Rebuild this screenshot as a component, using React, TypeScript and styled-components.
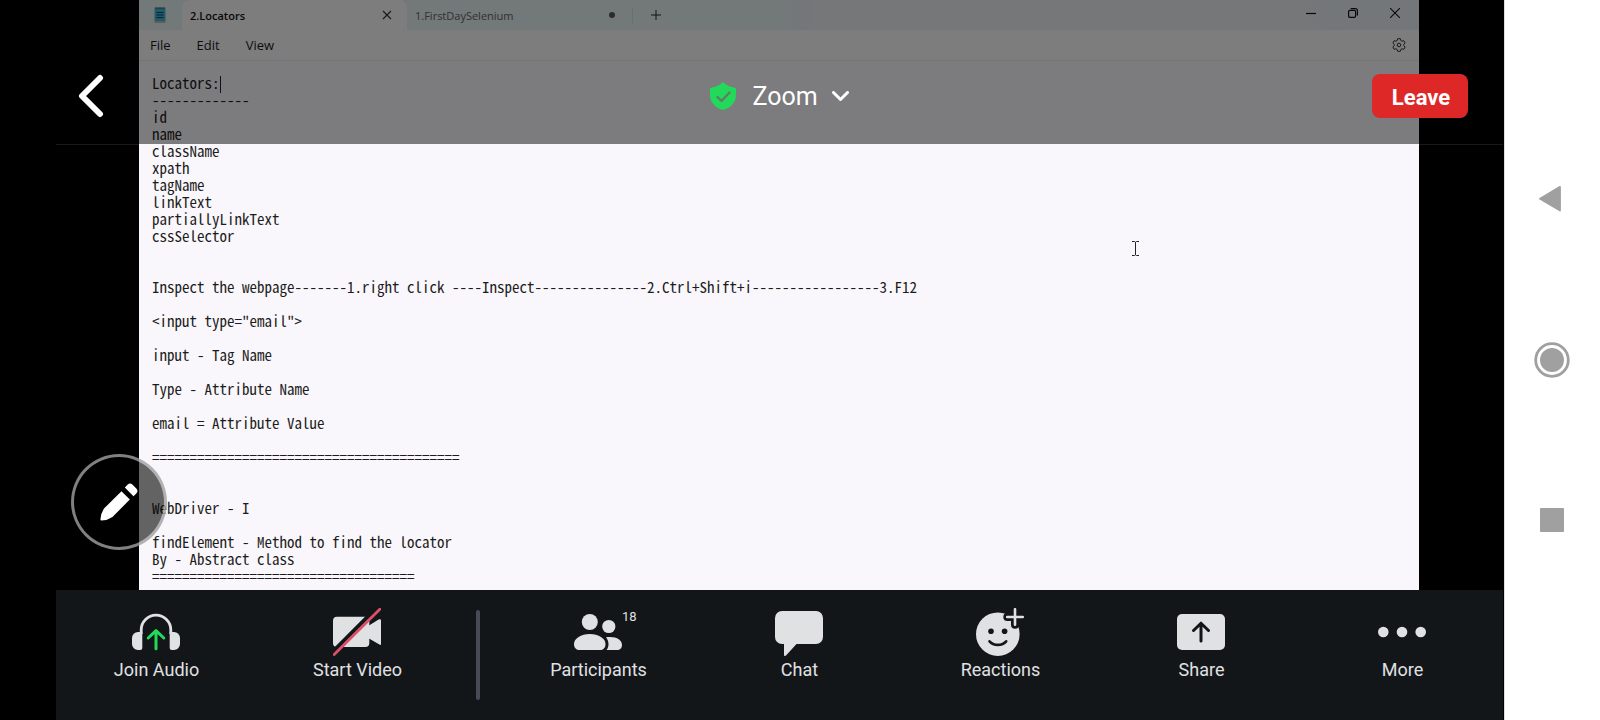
import React from "react";
import styled, { createGlobalStyle } from "styled-components";

const GlobalStyle = createGlobalStyle`
  *, *::before, *::after { box-sizing: border-box; }
  body { margin: 0; background: #000; font-family: Roboto, sans-serif; }
  button { margin: 0; padding: 0; border: 0; background: none; color: inherit; font: inherit; cursor: pointer; }
  svg { display: block; flex: none; }
`;

const Device = styled.div`
  display: flex;
  min-height: 100vh;
  background: #000;
`;

const Meeting = styled.main`
  flex: 1;
  min-width: 0;
  display: flex;
  flex-direction: column;
  margin: 0 1px 0 56px;
`;

const Stage = styled.section`
  position: relative;
  flex: 1;
  display: flex;
  padding: 0 84px 0 83px;
`;

/* Shared desktop window */
const Notepad = styled.div`
  flex: 1;
  min-width: 0;
  display: flex;
  flex-direction: column;
  background: #f9f7fb;
  color: #1b1b1b;
  font-family: "Open Sans", "Noto Sans", sans-serif;
  font-size: 13px;
`;

const TitleBar = styled.div`
  display: flex;
  height: 30px;
  background: linear-gradient(90deg, #e6f0f3 0, #e6f0f3 50%, #edeef2 55%, #edeef2 75%, #e8eff3 100%);
`;

const AppIcon = styled.div`
  display: flex;
  align-items: center;
  width: 43px;
  padding-left: 15px;
`;

const Tab = styled.div<{ $active?: boolean }>`
  display: flex;
  align-items: center;
  justify-content: space-between;
  width: 225px;
  padding: 0 15px 0 8px;
  border-radius: 8px 8px 0 0;
  background: ${(p) => (p.$active ? "#fbfafd" : "transparent")};
  color: ${(p) => (p.$active ? "#111" : "#606468")};
  font-size: 11px;
  font-weight: ${(p) => (p.$active ? 600 : 400)};
`;

const UnsavedDot = styled.span`
  width: 6px;
  height: 6px;
  margin-right: 2px;
  border-radius: 50%;
  background: #55585c;
`;

const NewTab = styled.button`
  display: grid;
  place-items: center;
  width: 46px;
  margin: 7px 0;
  border-left: 1px solid #d3dde0;
`;

const WindowButtons = styled.div`
  display: flex;
  margin-left: auto;
  padding: 0 3px 4px 0;
`;

const WindowButton = styled.button`
  display: grid;
  place-items: center;
  width: 42px;
`;

const MenuBar = styled.div`
  display: flex;
  align-items: center;
  gap: 26px;
  height: 31px;
  padding: 0 13px 0 11px;
  border-bottom: 1px solid #ebe9ee;
  background: #fbfafd;
`;

const SettingsButton = styled.button`
  margin-left: auto;
`;

const Editor = styled.div`
  position: relative;
  flex: 1;
  display: flex;
`;

const Document = styled.textarea`
  flex: 1;
  min-width: 0;
  padding: 13px 13px 6px;
  border: 0;
  outline: 0;
  resize: none;
  overflow: hidden;
  background: transparent;
  color: #1c1c1c;
  font-family: "Noto Sans Mono CJK SC", "Liberation Mono", monospace;
  font-size: 15px;
  line-height: 17px;
  white-space: pre;
`;

const Caret = styled.span`
  position: absolute;
  top: 15px;
  left: 81px;
  width: 1px;
  height: 17px;
  background: #222;
`;

const Pointer = styled.svg`
  position: absolute;
  top: 240px;
  left: 1075px;
`;

/* Meeting chrome */
const Header = styled.header`
  position: absolute;
  inset: 0 0 auto;
  display: grid;
  grid-template-columns: 1fr auto 1fr;
  align-items: center;
  height: 145px;
  padding-top: 48px;
  border-bottom: 1px solid rgba(255, 255, 255, 0.1);
  background: rgba(0, 0, 0, 0.5);
  background-clip: padding-box;
  color: #fff;
`;

const BackButton = styled.button`
  justify-self: start;
  margin-left: 22px;
`;

const MeetingTitle = styled.button`
  display: flex;
  align-items: center;
  font-size: 25px;
  line-height: 32px;
`;

const TitleText = styled.span`
  padding: 2px 14px 0 16px;
`;

const LeaveButton = styled.button`
  justify-self: end;
  width: 96px;
  height: 44px;
  margin-right: 35px;
  padding: 2px 0 0 2px;
  border-radius: 8px;
  background: #de2828;
  font-size: 22px;
  font-weight: 700;
`;

const AnnotateButton = styled.button`
  position: absolute;
  left: 15px;
  bottom: 40px;
  display: grid;
  place-items: center;
  width: 96px;
  height: 96px;
  border: 3px solid rgba(255, 255, 255, 0.5);
  border-radius: 50%;
  background: rgba(0, 0, 0, 0.6);
`;

const Toolbar = styled.nav`
  display: flex;
  height: 130px;
  background: #131619;
`;

const ToolButton = styled.button`
  flex: 1;
  display: flex;
  flex-direction: column;
  align-items: center;
  gap: 3px;
  padding-top: 18px;
  color: #e0e1e3;
  font-size: 18px;
  line-height: 22px;
`;

const ToolIcon = styled.span`
  position: relative;
  margin-right: 1px;
`;

const Count = styled.span`
  position: absolute;
  top: 1px;
  left: 48px;
  font-size: 13px;
  line-height: 16px;
`;

const Divider = styled.span`
  width: 4px;
  margin: 20px 18px;
  border-radius: 2px;
  background: #464b55;
`;

const SystemNav = styled.nav`
  display: flex;
  flex-direction: column;
  align-items: center;
  justify-content: center;
  width: 96px;
  padding-right: 2px;
  border-left: 1px solid #dcdcdc;
  background: #fff;
`;

const SystemButton = styled.button`
  display: grid;
  place-items: center;
  width: 100%;
  height: 160px;
`;

const notes = [
  "Locators:",
  "-".repeat(13),
  "id",
  "name",
  "className",
  "xpath",
  "tagName",
  "linkText",
  "partiallyLinkText",
  "cssSelector",
  "",
  "",
  "Inspect the webpage-------1.right click ----Inspect---------------2.Ctrl+Shift+i-----------------3.F12",
  "",
  '<input type="email">',
  "",
  "input - Tag Name",
  "",
  "Type - Attribute Name",
  "",
  "email = Attribute Value",
  "",
  "=".repeat(41),
  "",
  "",
  "WebDriver - I",
  "",
  "findElement - Method to find the locator",
  "By - Abstract class",
  "=".repeat(35),
];

const INK = "#e0e1e3";
const DARK = "#131619";

const icons = {
  audio: (
    <>
      <path d="M9.2 26v-4a14.8 14.8 0 0 1 29.6 0v4" fill="none" stroke={INK} strokeWidth="2.8" />
      <path d="M10.3 24v16a2 2 0 0 1-2 2H6a6 6 0 0 1-6-6v-6a6 6 0 0 1 6-6zM37.7 24v16a2 2 0 0 0 2 2H42a6 6 0 0 0 6-6v-6a6 6 0 0 0-6-6z" fill={INK} />
      <path d="M24 40.8V23M16.2 30l7.8-7.4 7.8 7.4" fill="none" stroke="#23d959" strokeWidth="3" strokeLinecap="round" strokeLinejoin="round" />
    </>
  ),
  video: (
    <>
      <rect x="0" y="8.8" width="36.3" height="30.2" rx="4" fill={INK} />
      <path d="M36 17.5 45.6 11.5Q48 10.5 48 12.5V36Q48 37.6 46.4 36.6L36 30.5z" fill={INK} />
      <path d="M-1 44.5 44.5-1" stroke={DARK} strokeWidth="4" />
      <path d="M1.2 46.6 46.8 1.2" stroke="#dc5069" strokeWidth="2.8" strokeLinecap="round" />
    </>
  ),
  people: (
    <g fill={INK}>
      <circle cx="15.8" cy="14" r="8" />
      <circle cx="34.8" cy="18.5" r="6.6" />
      <path d="M0 36c0-5.5 7-10 15.8-10s15.7 4.5 15.7 10c0 4-2.5 6-5.5 6H5.5C2.5 42 0 40 0 36z" />
      <path d="M32 29.2C42 28 48 31.500 48 37c0 3-2 5-5 5H32.500C35.500 38.500 35 33 32 29.200z" />
    </g>
  ),
  chat: <path d="M7 3h34a7 7 0 0 1 7 7v19a7 7 0 0 1-7 7H21.500L11 47.500Q9 49 9 46.500V36H7a7 7 0 0 1-7-7V10a7 7 0 0 1 7-7z" fill={INK} />,
  reactions: (
    <>
      <circle cx="21.8" cy="26.2" r="21.8" fill={INK} />
      <path d="M39 1.3v15.4M31.3 9h15.4" stroke={DARK} strokeWidth="8" strokeLinecap="round" />
      <path d="M39 1.2v15.6M31.2 9h15.6" stroke={INK} strokeWidth="2.6" strokeLinecap="round" />
      <circle cx="15" cy="23.3" r="2.8" fill={DARK} />
      <circle cx="28.6" cy="23.3" r="2.8" fill={DARK} />
      <path d="M13.5 33.3c4 4.8 12.7 4.8 16.7 0" fill="none" stroke={DARK} strokeWidth="2.6" strokeLinecap="round" />
    </>
  ),
  share: (
    <>
      <rect y="6" width="48" height="36" rx="5" fill={INK} />
      <path d="M24 33V15.5M16.5 22.5l7.5-7.3 7.5 7.3" fill="none" stroke={DARK} strokeWidth="3" strokeLinecap="round" strokeLinejoin="round" />
    </>
  ),
  more: (
    <g fill={INK}>
      <circle cx="5.3" cy="24" r="5.3" />
      <circle cx="24" cy="24" r="5.3" />
      <circle cx="42.7" cy="24" r="5.3" />
    </g>
  ),
};

function Tool({ icon, label, count }: { icon: keyof typeof icons; label: string; count?: number }) {
  return (
    <ToolButton type="button">
      <ToolIcon>
        <svg width="48" height="48" viewBox="0 0 48 48" aria-hidden="true">{icons[icon]}</svg>
        {count !== undefined && <Count>{count}</Count>}
      </ToolIcon>
      {label}
    </ToolButton>
  );
}

function SharedNotepad() {
  return (
    <Notepad>
      <TitleBar>
        <AppIcon>
          <svg width="12" height="16" viewBox="0 0 12 16" aria-hidden="true">
            <rect x="0.5" y="13" width="11" height="3" fill="#c9b7ab" />
            <rect x="0.5" y="1" width="11" height="13" rx="1" fill="#45b4d2" />
            <path d="M2 0v2M4 0v2M6 0v2M8 0v2M10 0v2" stroke="#1b627d" />
            <path d="M2.5 5.5h7M2.5 8h7M2.5 10.5h7" stroke="#0f4b63" />
          </svg>
        </AppIcon>
        <Tab $active>
          <span>2.Locators</span>
          <button type="button" aria-label="Close tab">
            <svg width="10" height="10" viewBox="0 0 10 10" stroke="#333" strokeWidth="1.1"><path d="M1 1l8 8M9 1L1 9" /></svg>
          </button>
        </Tab>
        <Tab>
          <span>1.FirstDaySelenium</span>
          <UnsavedDot />
        </Tab>
        <NewTab type="button" aria-label="New tab">
          <svg width="10" height="10" viewBox="0 0 10 10" stroke="#222"><path d="M5 0v10M0 5h10" /></svg>
        </NewTab>
        <WindowButtons>
          <WindowButton type="button" aria-label="Minimize">
            <svg width="10" height="10" viewBox="0 0 10 10" stroke="#111" strokeWidth="1.2"><path d="M0 5.5h10" /></svg>
          </WindowButton>
          <WindowButton type="button" aria-label="Restore">
            <svg width="10" height="10" viewBox="0 0 10 10" fill="none" stroke="#111" strokeWidth="1.2"><rect x="0.6" y="2.4" width="7" height="7" rx="1.3" /><path d="M2.6.6H7.4Q9.4.6 9.4 2.6V7.4" /></svg>
          </WindowButton>
          <WindowButton type="button" aria-label="Close">
            <svg width="10" height="10" viewBox="0 0 10 10" stroke="#111" strokeWidth="1.1"><path d="M0 0l10 10M10 0L0 10" /></svg>
          </WindowButton>
        </WindowButtons>
      </TitleBar>
      <MenuBar>
        <button type="button">File</button>
        <button type="button">Edit</button>
        <button type="button">View</button>
        <SettingsButton type="button" aria-label="Settings">
          <svg width="14" height="14" viewBox="0 0 14 14" fill="none" stroke="#333" strokeLinejoin="round">
            <path d="M5.7.7h2.6l.5 1.8 1.2.7 1.8-.5 1.3 2.2-1.3 1.4v1.4l1.3 1.4-1.3 2.2-1.8-.5-1.2.7-.5 1.8H5.7l-.5-1.8-1.2-.7-1.8.5L.9 9.1l1.3-1.4V6.3L.9 4.9l1.3-2.2 1.8.5 1.2-.7z" />
            <circle cx="7" cy="7" r="1.8" />
          </svg>
        </SettingsButton>
      </MenuBar>
      <Editor>
        <Document aria-label="Document text" rows={30} spellCheck={false} readOnly value={notes.join("\n")} />
        <Caret />
      </Editor>
    </Notepad>
  );
}

export default function App() {
  return (
    <>
      <GlobalStyle />
      <Device>
        <Meeting>
          <Stage>
            <SharedNotepad />
            <Pointer width="9" height="17" viewBox="0 0 9 17" fill="none" stroke="#222" aria-hidden="true">
              <path d="M1 1.5h2.5l1 .7 1-.7H8M1 15.5h2.5l1-.7 1 .7H8M4.5 2v13" />
            </Pointer>
            <Header>
              <BackButton type="button" aria-label="Back">
                <svg width="26" height="44" viewBox="0 0 26 44" fill="none" stroke="#fff" strokeWidth="6" strokeLinecap="round" strokeLinejoin="round">
                  <path d="M22 4 4 22l18 18" />
                </svg>
              </BackButton>
              <MeetingTitle type="button">
                <svg width="26" height="28" viewBox="0 0 26 28" aria-hidden="true">
                  <path fill="#23d959" d="M13 0c3.5 3.3 7.5 5.3 12 5.7q1 .1 1 1.1v6.5C26 20 21 26 13 28 5 26 0 20 0 13.3V6.8q0-1 1-1.1C5.5 5.3 9.5 3.3 13 0z" />
                  <path d="M7.5 15l4 4 8-8.5" fill="none" stroke="#5f7d68" strokeWidth="2.4" strokeLinecap="round" strokeLinejoin="round" />
                </svg>
                <TitleText>Zoom</TitleText>
                <svg width="17" height="10" viewBox="0 0 17 10" fill="none" stroke="#fff" strokeWidth="3" strokeLinecap="round" strokeLinejoin="round" aria-hidden="true">
                  <path d="M1.5 1.5l7 7 7-7" />
                </svg>
              </MeetingTitle>
              <LeaveButton type="button">Leave</LeaveButton>
            </Header>
            <AnnotateButton type="button" aria-label="Annotate">
              <svg width="38" height="38" viewBox="0 0 38 38" fill="#fff">
                <path d="M21.5 8.2 29.8 16.5 12.5 34Q7.5 37.3 1.5 37.6.4 37.6.4 36.5.7 30.5 4 25.5z" />
                <path d="M24.8 4.5 27.5 1.7Q30-.8 32.6 1.7L36.3 5.4Q38.7 8 36.3 10.5L33.5 13.2z" />
              </svg>
            </AnnotateButton>
          </Stage>
          <Toolbar>
            <Tool icon="audio" label="Join Audio" />
            <Tool icon="video" label="Start Video" />
            <Divider />
            <Tool icon="people" label="Participants" count={18} />
            <Tool icon="chat" label="Chat" />
            <Tool icon="reactions" label="Reactions" />
            <Tool icon="share" label="Share" />
            <Tool icon="more" label="More" />
          </Toolbar>
        </Meeting>
        <SystemNav>
          <SystemButton type="button" aria-label="Back">
            <svg width="28" height="28" viewBox="0 0 28 28"><path d="M2 12.7 22 .9V24.500z" fill="#a0a0a0" stroke="#a0a0a0" strokeWidth="1.8" strokeLinejoin="round" /></svg>
          </SystemButton>
          <SystemButton type="button" aria-label="Home">
            <svg width="36" height="36" viewBox="0 0 36 36"><circle cx="18" cy="18" r="16.3" fill="none" stroke="#a0a0a0" strokeWidth="2.8" /><circle cx="18" cy="18" r="12" fill="#a0a0a0" /></svg>
          </SystemButton>
          <SystemButton type="button" aria-label="Recent apps">
            <svg width="24" height="24" viewBox="0 0 24 24"><rect width="24" height="24" rx="1" fill="#a0a0a0" /></svg>
          </SystemButton>
        </SystemNav>
      </Device>
    </>
  );
}
